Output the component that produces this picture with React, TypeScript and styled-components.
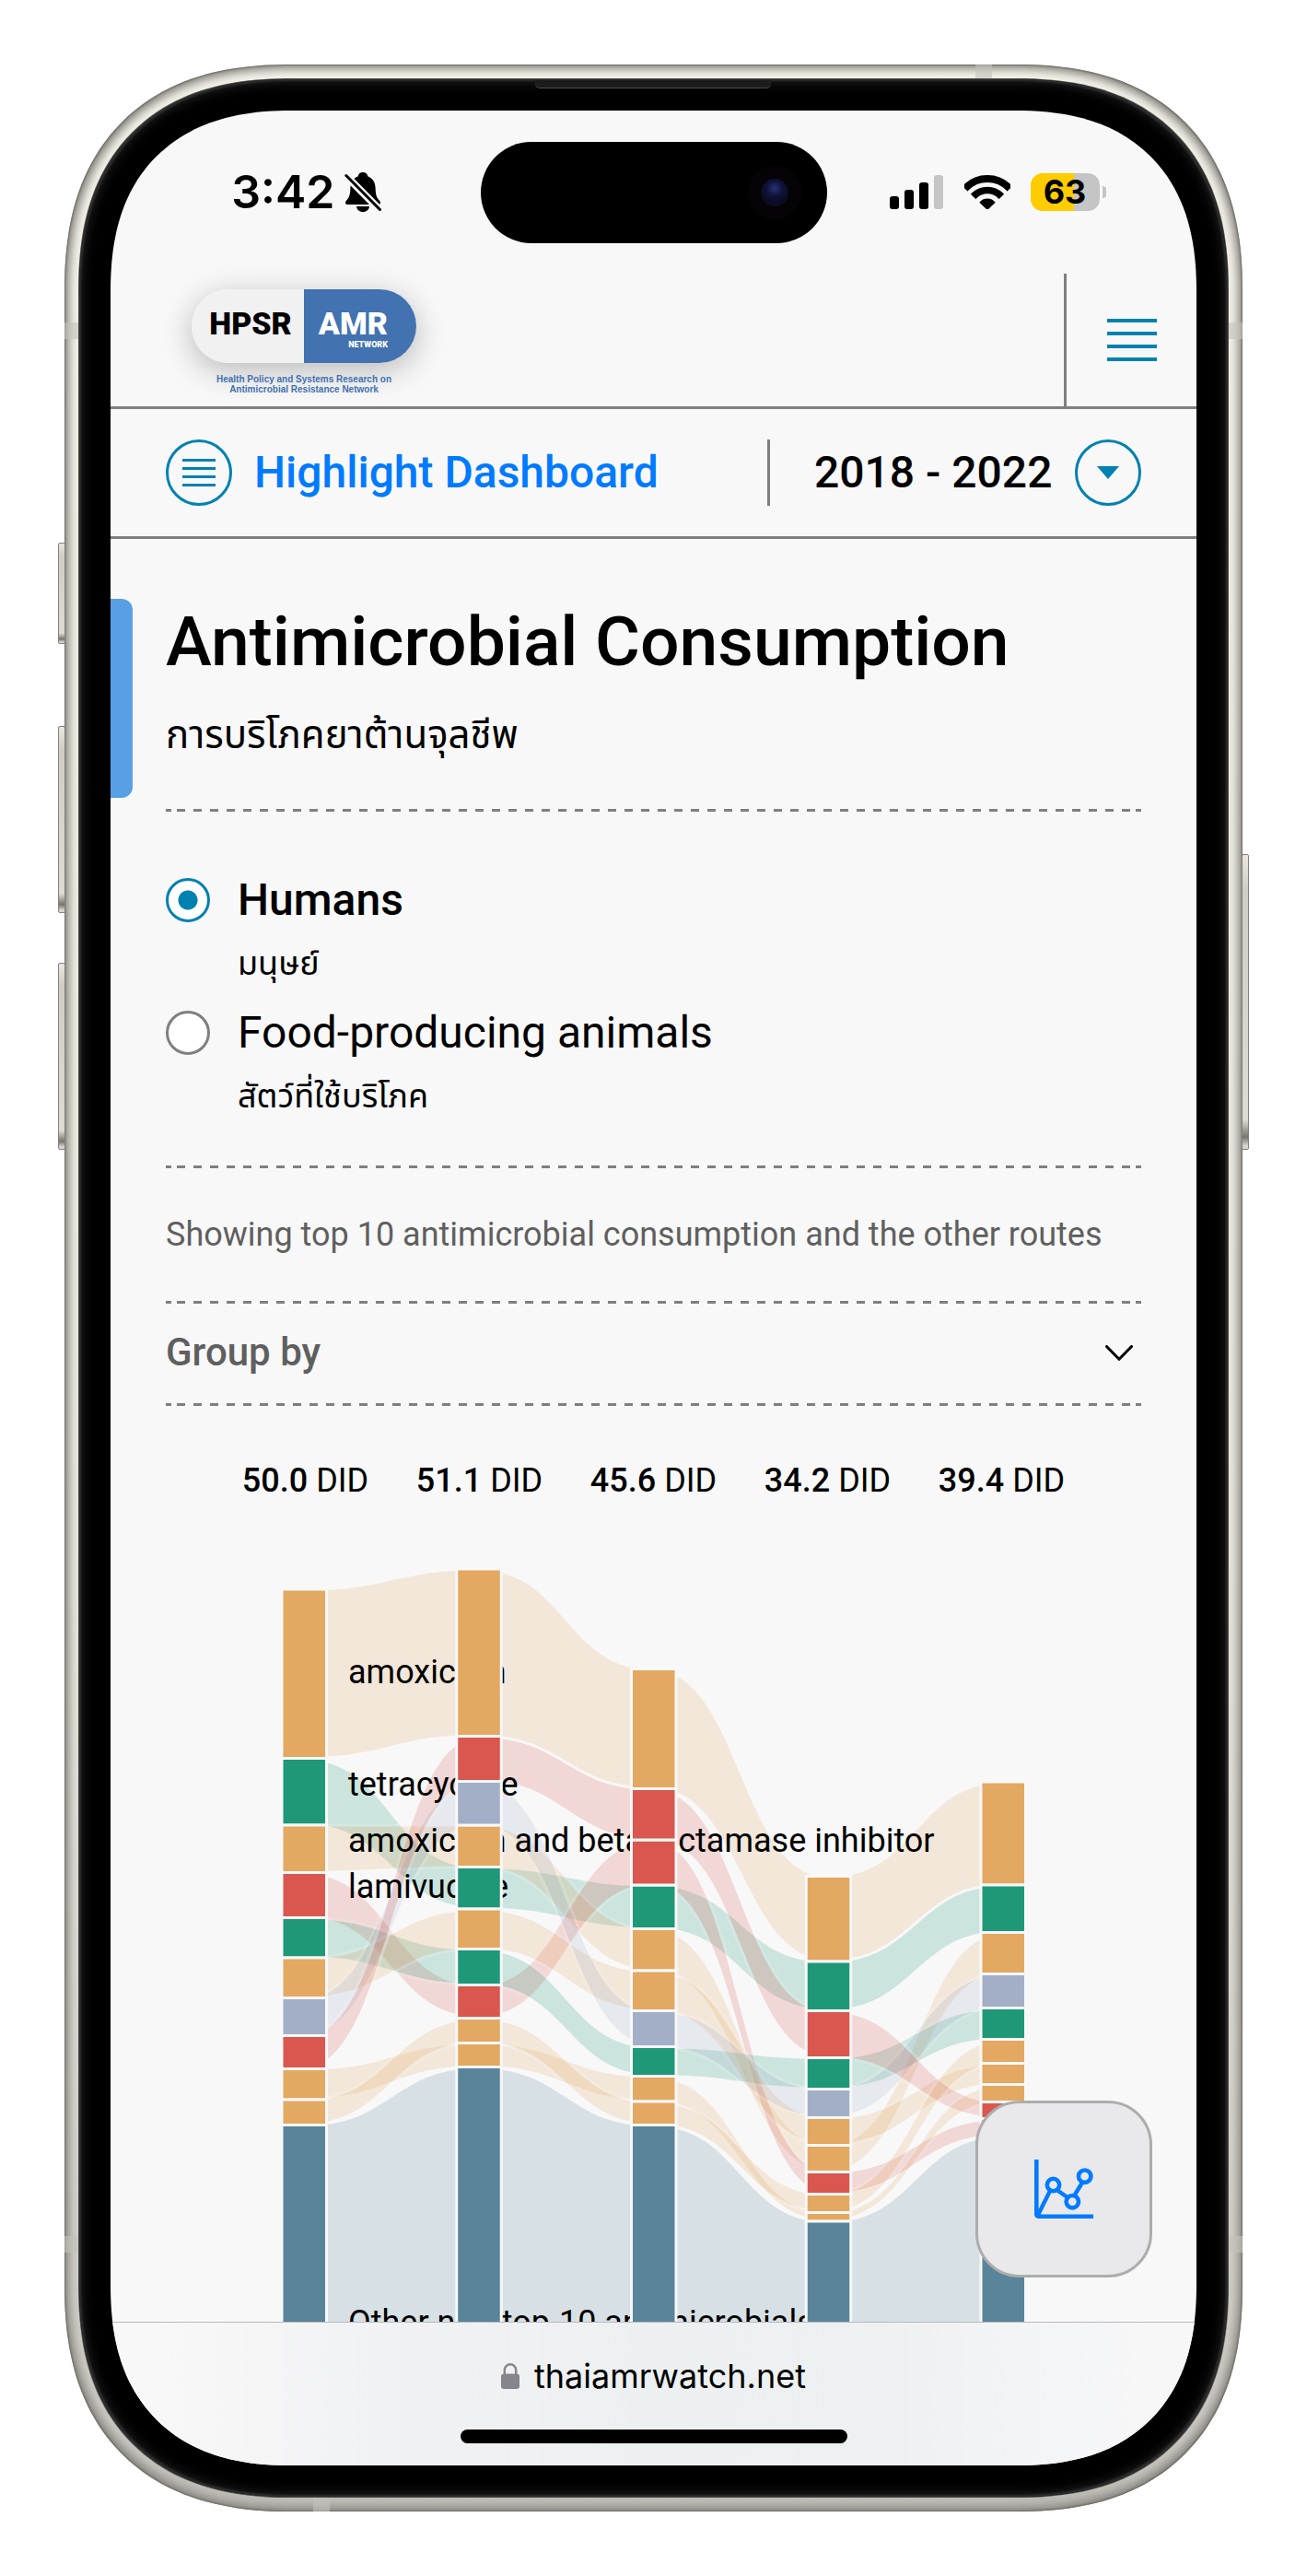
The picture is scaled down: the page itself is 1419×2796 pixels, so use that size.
import React, { useId, useState } from "react";
import styled, { createGlobalStyle, css } from "styled-components";

const ink = "#000000";
const paper = "#f8f8f8";
const teal = "#0081b0";
const link = "#007aff";
const rule = "#7f7f7f";
const muted = "#5f5f5f";

const sans = `Roboto, "Noto Sans Thai", "Noto Sans", sans-serif`;
const system = `Inter, "Noto Sans", sans-serif`;

const GlobalStyle = createGlobalStyle`
  *, *::before, *::after { box-sizing: border-box; }
  body { margin: 0; background: #ffffff; color: ${ink}; font-family: ${sans}; }
  h1, p { margin: 0; }
  button, select { font: inherit; color: inherit; background: none; border: 0; padding: 0; margin: 0; cursor: pointer; }
  svg { display: block; flex: none; }
`;

/* ---------- device ---------- */

// Continuous corners where the browser can draw them, plain round ones elsewhere.
const corners = (round: number, smooth: number) => css`
  border-radius: ${round}px;

  @supports (corner-shape: superellipse(1.25)) {
    border-radius: ${smooth}px;
    corner-shape: superellipse(1.25);
  }
`;

const Page = styled.div`
  padding: 70px;
`;

const Device = styled.div`
  position: relative;
  max-width: 1279px;
  margin: 0 auto;
  padding: 16px;
  background: linear-gradient(#f3f1e8, #e8e6dd 60%, #c9c7c1 97%, #bcbab4);
  box-shadow:
    inset 0 0 2px 1px #6f6d67,
    inset 0 0 10px 5px #8b8983;
  ${corners(214, 247)}
`;

const Bezel = styled.div`
  position: relative;
  padding: 34px;
  background: #000000;
  box-shadow:
    0 0 0 1px #4d4c49,
    inset 0 0 2px 2px #2e2e2e,
    inset 0 0 14px 2px #262626;
  ${corners(198, 231)}
`;

const Speaker = styled.div`
  position: absolute;
  top: 1px;
  left: 50%;
  width: 256px;
  height: 9px;
  margin-left: -129px;
  border-radius: 0 0 5px 5px;
  border-bottom: 1px solid #4a4a4a;
  background: #1c1c1c;
`;

const SideKey = styled.div<{ $side: "left" | "right"; $top: number; $length: number }>`
  position: absolute;
  top: ${(p) => p.$top}px;
  ${(p) => p.$side}: -7px;
  width: 8px;
  height: ${(p) => p.$length}px;
  border: 1px solid #85827b;
  border-radius: 2px;
  background: linear-gradient(#e9e7df 0, #cfcdc6 12%, #dddbd3 90%, #77746d 96%, #d8d6cf 99%);
`;

const Antenna = styled.div<{ $edge: "top" | "bottom" | "left" | "right"; $at: number }>`
  position: absolute;
  ${(p) => p.$edge}: 0;
  ${(p) => (p.$edge === "left" || p.$edge === "right" ? "top" : "left")}: ${(p) => p.$at}px;
  width: ${(p) => (p.$edge === "left" || p.$edge === "right" ? 16 : 18)}px;
  height: ${(p) => (p.$edge === "left" || p.$edge === "right" ? 18 : 16)}px;
  background: rgba(196, 194, 187, 0.6);
`;

const Screen = styled.div`
  overflow: hidden;
  background: ${paper};
  ${corners(170, 197)}
`;

/* ---------- status bar ---------- */

const StatusBar = styled.div`
  display: grid;
  grid-template-columns: 1fr 376px 1fr;
  align-items: center;
  padding: 34px 0 33px;
  font-family: ${system};
`;

const StatusLeft = styled.div`
  display: flex;
  justify-content: flex-end;
  align-items: center;
  gap: 10px;
  padding: 0 108px 2px 0;
`;

const Clock = styled.span`
  font-size: 50px;
  line-height: 60px;
  font-weight: 600;
`;

const Island = styled.div`
  display: flex;
  align-items: center;
  justify-content: flex-end;
  height: 110px;
  padding-right: 28px;
  border-radius: 55px;
  background: #000000;
`;

const Lens = styled.div`
  width: 58px;
  height: 58px;
  border: 14px solid #050306;
  border-radius: 50%;
  background: radial-gradient(circle at 50% 35%, #2a2f78 0, #10123a 35%, #0b0c22 60%, #0d0f2a 100%);
`;

const StatusRight = styled.div`
  display: flex;
  align-items: center;
  gap: 22px;
  padding: 0 0 2px 68px;
`;

const Battery = styled.div`
  display: flex;
  align-items: center;
  gap: 3px;
`;

const BatteryBody = styled.span<{ $level: number }>`
  width: 75px;
  border-radius: 13px;
  background: linear-gradient(90deg, #ffcc00 ${(p) => p.$level}%, #c5c5c5 ${(p) => p.$level}%);
  font-size: 36px;
  line-height: 41px;
  font-weight: 700;
  text-align: center;
`;

const BatteryCap = styled.span`
  width: 4px;
  height: 13px;
  border-radius: 0 6px 6px 0;
  background: #c5c5c5;
`;

/* ---------- site header ---------- */

const Header = styled.header`
  display: flex;
  justify-content: space-between;
  border-bottom: 3px solid ${rule};
`;

const Brand = styled.a`
  display: flex;
  flex-direction: column;
  align-items: center;
  gap: 12px;
  padding: 17px 0 13px 88px;
  color: inherit;
  text-decoration: none;
`;

const Pill = styled.span`
  display: grid;
  grid-template-columns: 1fr 1fr;
  width: 244px;
  height: 80px;
  overflow: hidden;
  border-radius: 40px;
  background: #f1f1f1;
`;

const PillShadow = styled.span`
  border-radius: 40px;
  box-shadow: 0 8px 34px rgba(0, 0, 0, 0.26);
`;

const PillHalf = styled.span<{ $filled?: boolean }>`
  display: flex;
  flex-direction: column;
  align-items: ${(p) => (p.$filled ? "flex-end" : "center")};
  padding: ${(p) => (p.$filled ? "18px 31px 0 0" : "18px 0 0 6px")};
  background: ${(p) => (p.$filled ? "#4272b0" : "transparent")};
  color: ${(p) => (p.$filled ? "#ffffff" : ink)};
`;

const PillWord = styled.span`
  font-size: 34px;
  line-height: 38px;
  font-weight: 900;
`;

const PillNote = styled.span`
  font-size: 9px;
  line-height: 9px;
  font-weight: 900;
`;

const BrandNote = styled.span`
  color: #4272b0;
  font-family: "Liberation Sans", Arial, sans-serif;
  font-size: 10px;
  line-height: 11px;
  font-weight: 700;
  text-align: center;
`;

const MenuButton = styled.button`
  display: flex;
  align-items: center;
  justify-content: center;
  width: 144px;
  border-left: 3px solid ${rule};
`;

/* ---------- dashboard bar ---------- */

const DashboardBar = styled.nav`
  display: flex;
  justify-content: space-between;
  padding: 33px 60px;
  border-bottom: 3px solid ${rule};
  font-size: 48px;
  line-height: 71px;
  font-weight: 500;
`;

const DashboardLink = styled.a`
  display: flex;
  gap: 24px;
  color: ${link};
  text-decoration: none;
`;

const RoundIcon = styled.span`
  display: flex;
  align-items: center;
  justify-content: center;
  width: 72px;
  height: 72px;
  border: 3px solid ${teal};
  border-radius: 50%;
`;

const YearPicker = styled.label`
  display: flex;
  gap: 24px;
  padding-left: 48px;
  border-left: 3px solid ${rule};
`;

const YearSelect = styled.select`
  appearance: none;
  height: 71px;
  font-weight: 500;
`;

/* ---------- content ---------- */

const Viewport = styled.div`
  position: relative;
`;

const TitleBlock = styled.section`
  display: flex;
  gap: 36px;
  padding: 65px 0 12px;
`;

const TitleTab = styled.span`
  width: 24px;
  border-radius: 0 12px 12px 0;
  background: #589fe5;
`;

const TitleText = styled.div`
  display: flex;
  flex-direction: column;
  gap: 20px;
  min-height: 216px;
`;

const Title = styled.h1`
  font-size: 75px;
  line-height: 92px;
  font-weight: 500;
`;

const Subtitle = styled.p`
  font-size: 42px;
  line-height: 72px;
`;

const Body = styled.div`
  padding: 0 60px;
`;

const DashedRule = styled.div`
  height: 3px;
  border: solid ${rule};
  border-width: 0 6px;
  background: repeating-linear-gradient(90deg, transparent 0 6px, ${rule} 6px 15px, transparent 15px 18px);
`;

const Options = styled.div`
  display: flex;
  flex-direction: column;
  gap: 12px;
  padding: 60px 0 48px;
`;

const Option = styled.label`
  display: grid;
  grid-template-columns: 48px 1fr;
  column-gap: 30px;
  align-items: center;
  cursor: pointer;
`;

const Radio = styled.input`
  appearance: none;
  width: 48px;
  height: 48px;
  margin: 0;
  border: 3px solid ${rule};
  border-radius: 50%;
  background: #ffffff;

  &:checked {
    border-color: ${teal};
    background: radial-gradient(circle, ${teal} 10px, #ffffff 11px);
  }
`;

const OptionName = styled.span<{ $strong: boolean }>`
  font-size: 48px;
  line-height: 72px;
  font-weight: ${(p) => (p.$strong ? 500 : 400)};
`;

const OptionNote = styled.span`
  grid-column: 2;
  padding-top: 6px;
  font-size: 36px;
  line-height: 54px;
`;

const Note = styled.p`
  padding: 48px 0;
  color: ${muted};
  font-size: 36px;
  line-height: 48px;
`;

const GroupToggle = styled.button`
  display: flex;
  align-items: center;
  justify-content: space-between;
  width: 100%;
  padding: 29px 9px 31px 0;
  color: ${muted};
  font-size: 42px;
  line-height: 48px;
  font-weight: 500;
`;

const Totals = styled.div`
  display: grid;
  grid-template-columns: repeat(5, 1fr);
  padding: 57px 57px 9px;
  font-size: 36px;
  line-height: 48px;
  text-align: center;
  white-space: nowrap;
`;

const TotalValue = styled.span`
  font-weight: 500;
`;

const ChartSvg = styled.svg`
  width: 100%;
  height: auto;
  font-family: ${sans};
  font-size: 36px;
`;

const ChartButton = styled.button`
  position: absolute;
  right: 48px;
  bottom: 48px;
  display: flex;
  align-items: center;
  justify-content: center;
  width: 192px;
  height: 192px;
  border: 3px solid #adadad;
  border-radius: 48px;
  background: #e9e9eb;
`;

/* ---------- browser bar ---------- */

const BrowserBar = styled.footer`
  display: flex;
  flex-direction: column;
  align-items: center;
  gap: 34px;
  padding: 34px 0 24px;
  border-top: 1px solid #b9b9bd;
  background: linear-gradient(90deg, #f8f8f8 4%, #f0f1f3 28%, #edf0f1 50%, #eef1f2 72%, #f7f7f8 96%);
`;

const Address = styled.div`
  display: flex;
  align-items: center;
  gap: 16px;
  font-family: ${system};
  font-size: 36px;
  line-height: 48px;
`;

const HomeIndicator = styled.div`
  width: 420px;
  height: 15px;
  border-radius: 8px;
  background: #000000;
`;

/* ---------- icons ---------- */

const BellOff = () => (
  <svg width="40" height="43" viewBox="0 0 40 43" aria-hidden="true">
    <path d="M20 0c3 0 5 2 5.400 4.600 5.400 2 8 6.600 8.200 12.400.2 8 1.400 10.600 4.600 14 1.600 1.800.6 4-1.600 4H3.400c-2.200 0-3.200-2.200-1.600-4 3.200-3.400 4.400-6 4.600-14C6.600 11.200 9.200 6.600 14.600 4.600 15 2 17 0 20 0z" fill={ink} />
    <path d="M13 37h14c-.4 3.600-3 6-7 6s-6.600-2.400-7-6z" fill={ink} />
    <path d="M-2 0L14 17M4 2H8L6 9z" stroke={paper} fill={paper} strokeWidth="3" />
    <path d="M0 2L40 42.500" stroke={paper} strokeWidth="8" />
    <path d="M1.800 3.500L38.500 40.500" stroke={ink} strokeWidth="3" strokeLinecap="round" />
  </svg>
);

const Signal = () => (
  <svg width="59" height="37" viewBox="0 0 59 37" aria-hidden="true">
    <rect x="0" y="23" width="10" height="14" rx="3" />
    <rect x="16" y="16" width="10" height="21" rx="3" />
    <rect x="32" y="8" width="10" height="29" rx="3" />
    <rect x="48" y="0" width="10" height="37" rx="3" fill="#c5c5c5" />
  </svg>
);

const Wifi = () => {
  const id = useId();
  return (
    <svg width="50" height="37" viewBox="0 0 50 37" aria-hidden="true">
      <clipPath id={id}>
        <path d="M25 38L-15 0V-6H65V0z" />
      </clipPath>
      <g clipPath={`url(#${id})`} fill="none" stroke={ink}>
        <circle cx="25" cy="37" r="33" strokeWidth="8" />
        <circle cx="25" cy="37" r="20.500" strokeWidth="7.600" />
        <circle cx="25" cy="37" r="5.700" strokeWidth="11.400" />
      </g>
    </svg>
  );
};

const MenuLines = ({ width, pitch, weight }: { width: number; pitch: number; weight: number }) => {
  const height = pitch * 3 + weight;
  return (
    <svg width={width} height={height} viewBox={`0 0 ${width} ${height}`} fill={teal} aria-hidden="true">
      {[0, 1, 2, 3].map((i) => (
        <rect key={i} y={i * pitch} width={width} height={weight} />
      ))}
    </svg>
  );
};

const Caret = () => (
  <svg width="24" height="14" viewBox="0 0 24 14" aria-hidden="true">
    <path d="M0 0h24L12 14z" fill={teal} />
  </svg>
);

const Chevron = () => (
  <svg width="30" height="17" viewBox="0 0 30 17" fill="none" aria-hidden="true">
    <path d="M1.500 1.500L15 15.200 28.500 1.500" stroke={ink} strokeWidth="3" strokeLinecap="round" />
  </svg>
);

const TrendIcon = () => (
  <svg width="64" height="64" viewBox="0 0 64 64" fill="none" stroke={link} aria-hidden="true">
    <path d="M2.300 0V59.500a2.200 2.200 0 0 0 2.200 2.200H64" strokeWidth="4.600" />
    <path d="M4 60L17 34M24.500 33L36.500 41.500M44 38L52 25" strokeWidth="4.400" />
    <circle cx="20.500" cy="27.500" r="6.700" strokeWidth="4.600" />
    <circle cx="41.300" cy="45.700" r="6.700" strokeWidth="4.600" />
    <circle cx="54.700" cy="18.200" r="6.700" strokeWidth="4.600" />
  </svg>
);

const Lock = () => (
  <svg width="20" height="28" viewBox="0 0 20 28" aria-hidden="true">
    <rect y="11.500" width="20" height="16.500" rx="3" fill="#85858b" />
    <path d="M3.800 13V7.500a6.200 6.200 0 0 1 12.400 0V13" fill="none" stroke="#85858b" strokeWidth="2.400" />
  </svg>
);

/* ---------- consumption chart ---------- */

const tones = {
  orange: "#e3a861",
  green: "#1f9878",
  red: "#d9574e",
  lavender: "#a2afc7",
  slate: "#598499",
};

type Tone = keyof typeof tones;

// One stacked column per year: where the stack starts, then each share from the top down.
const columns = [
  { top: 85, shares: [183.5, 72.5, 51.5, 49, 43.5, 43.5, 41, 36, 33.5, 27.5, 400] },
  { top: 63, shares: [181.5, 49, 47.5, 45.5, 45.5, 43.5, 39, 36, 27, 26, 400] },
  { top: 171.5, shares: [130, 55.5, 49, 47.5, 45.5, 43.5, 39, 32, 27.5, 25.5, 400] },
  { top: 396.5, shares: [92.5, 53.5, 51, 34, 31, 30, 29, 24, 20, 9.5, 400] },
  { top: 294, shares: [112, 51.5, 45, 37, 34, 26, 23, 19, 18, 18.5, 400] },
];

// The rank each substance holds in every year.
const series: { tone: Tone; ranks: number[] }[] = [
  { tone: "orange", ranks: [0, 0, 0, 0, 0] },
  { tone: "green", ranks: [1, 4, 3, 1, 1] },
  { tone: "orange", ranks: [2, 3, 4, 6, 2] },
  { tone: "red", ranks: [3, 7, 2, 7, 9] },
  { tone: "green", ranks: [4, 6, 7, 3, 4] },
  { tone: "orange", ranks: [5, 5, 5, 5, 6] },
  { tone: "lavender", ranks: [6, 2, 6, 4, 3] },
  { tone: "red", ranks: [7, 1, 1, 2, 8] },
  { tone: "orange", ranks: [8, 9, 8, 9, 7] },
  { tone: "orange", ranks: [9, 8, 9, 8, 5] },
  { tone: "slate", ranks: [10, 10, 10, 10, 10] },
];

const seriesLabels = [
  { text: "amoxicillin", y: 187 },
  { text: "tetracycline", y: 309 },
  { text: "amoxicillin and beta-lactamase inhibitor", y: 370 },
  { text: "lamivudine", y: 420 },
  { text: "Other non-top-10 antimicrobials", y: 893 },
];

const centre = (column: number) => 210 + column * 189.75;

const span = (column: number, rank: number) => {
  const { top, shares } = columns[column];
  const start = shares.slice(0, rank).reduce((sum, share) => sum + share, top);
  return [start, start + shares[rank]] as const;
};

const ribbon = (column: number, from: number, to: number) => {
  const [a0, a1] = span(column, from);
  const [b0, b1] = span(column + 1, to);
  const x0 = centre(column);
  const x1 = centre(column + 1);
  const mid = (x0 + x1) / 2;
  return `M${x0} ${a0}C${mid} ${a0} ${mid} ${b0} ${x1} ${b0}V${b1}C${mid} ${b1} ${mid} ${a1} ${x0} ${a1}Z`;
};

const Chart = () => (
  <ChartSvg viewBox="0 0 1179 880" role="img" aria-label="Antimicrobial consumption by year">
    {series.map((item, s) =>
      item.ranks.slice(0, -1).map((rank, c) => (
        <path
          key={`${s}-${c}`}
          d={ribbon(c, rank, item.ranks[c + 1])}
          fill={tones[item.tone]}
          stroke={paper}
          strokeWidth="3"
          opacity="0.2"
        />
      )),
    )}
    {seriesLabels.map((label) => (
      <text key={label.text} x="258" y={label.y}>
        {label.text}
      </text>
    ))}
    {series.map((item, s) =>
      item.ranks.map((rank, c) => {
        const [y0, y1] = span(c, rank);
        return (
          <rect
            key={`${s}-${c}`}
            x={centre(c) - 24}
            y={y0}
            width="48.500"
            height={y1 - y0}
            fill={tones[item.tone]}
            stroke={paper}
            strokeWidth="3"
          />
        );
      }),
    )}
  </ChartSvg>
);

/* ---------- page ---------- */

const totals = ["50.0", "51.1", "45.6", "34.2", "39.4"];

const populations = [
  { id: "humans", name: "Humans", note: "มนุษย์" },
  { id: "animals", name: "Food-producing animals", note: "สัตว์ที่ใช้บริโภค" },
];

export default function App() {
  const [population, setPopulation] = useState("humans");
  const [open, setOpen] = useState(false);

  return (
    <Page>
      <GlobalStyle />
      <Device>
        <SideKey $side="left" $top={519} $length={110} />
        <SideKey $side="left" $top={718} $length={203} />
        <SideKey $side="left" $top={975} $length={203} />
        <SideKey $side="right" $top={857} $length={321} />
        <Antenna $edge="top" $at={989} />
        <Antenna $edge="left" $at={280} />
        <Antenna $edge="right" $at={280} />
        <Antenna $edge="left" $at={2357} />
        <Antenna $edge="right" $at={2357} />
        <Antenna $edge="bottom" $at={270} />
        <Bezel>
          <Speaker />
          <Screen>
            <StatusBar>
              <StatusLeft>
                <Clock>3:42</Clock>
                <BellOff />
              </StatusLeft>
              <Island>
                <Lens />
              </Island>
              <StatusRight>
                <Signal />
                <Wifi />
                <Battery>
                  <BatteryBody $level={63}>63</BatteryBody>
                  <BatteryCap />
                </Battery>
              </StatusRight>
            </StatusBar>

            <Header>
              <Brand href="#home">
                <PillShadow>
                  <Pill>
                    <PillHalf>
                      <PillWord>HPSR</PillWord>
                    </PillHalf>
                    <PillHalf $filled>
                      <PillWord>AMR</PillWord>
                      <PillNote>NETWORK</PillNote>
                    </PillHalf>
                  </Pill>
                </PillShadow>
                <BrandNote>
                  Health Policy and Systems Research on
                  <br />
                  Antimicrobial Resistance Network
                </BrandNote>
              </Brand>
              <MenuButton type="button" aria-label="Menu">
                <MenuLines width={54} pitch={14} weight={4} />
              </MenuButton>
            </Header>

            <DashboardBar>
              <DashboardLink href="#highlight">
                <RoundIcon>
                  <MenuLines width={36} pitch={9} weight={3} />
                </RoundIcon>
                Highlight Dashboard
              </DashboardLink>
              <YearPicker>
                <YearSelect aria-label="Years" defaultValue="2018-2022">
                  <option value="2018-2022">2018 - 2022</option>
                </YearSelect>
                <RoundIcon>
                  <Caret />
                </RoundIcon>
              </YearPicker>
            </DashboardBar>

            <Viewport>
              <TitleBlock>
                <TitleTab />
                <TitleText>
                  <Title>Antimicrobial Consumption</Title>
                  <Subtitle lang="th">การบริโภคยาต้านจุลชีพ</Subtitle>
                </TitleText>
              </TitleBlock>
              <Body>
                <DashedRule />
                <Options role="radiogroup" aria-label="Population">
                  {populations.map((item) => (
                    <Option key={item.id}>
                      <Radio
                        type="radio"
                        name="population"
                        value={item.id}
                        checked={population === item.id}
                        onChange={() => setPopulation(item.id)}
                      />
                      <OptionName $strong={population === item.id}>{item.name}</OptionName>
                      <OptionNote lang="th">{item.note}</OptionNote>
                    </Option>
                  ))}
                </Options>
                <DashedRule />
                <Note>Showing top 10 antimicrobial consumption and the other routes</Note>
                <DashedRule />
                <GroupToggle type="button" aria-expanded={open} onClick={() => setOpen(!open)}>
                  Group by
                  <Chevron />
                </GroupToggle>
                <DashedRule />
                <Totals>
                  {totals.map((value) => (
                    <span key={value}>
                      <TotalValue>{value}</TotalValue> DID
                    </span>
                  ))}
                </Totals>
              </Body>
              <Chart />
              <ChartButton type="button" aria-label="Charts">
                <TrendIcon />
              </ChartButton>
            </Viewport>

            <BrowserBar>
              <Address>
                <Lock />
                thaiamrwatch.net
              </Address>
              <HomeIndicator />
            </BrowserBar>
          </Screen>
        </Bezel>
      </Device>
    </Page>
  );
}
